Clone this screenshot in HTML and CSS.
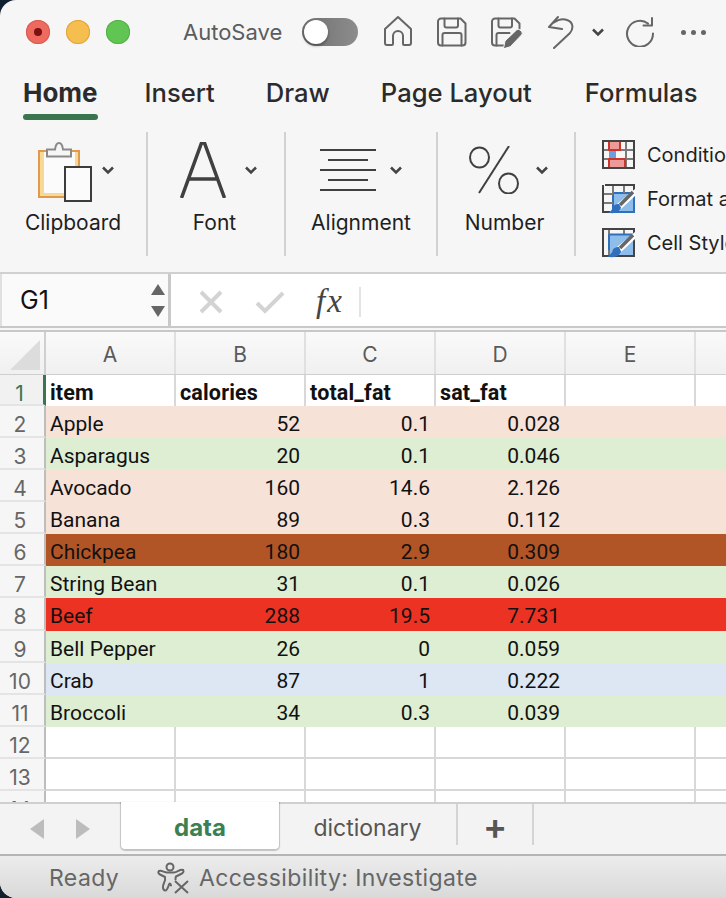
FILE: index.html
```html
<!DOCTYPE html>
<html lang="en">
<head>
<meta charset="utf-8">
<title>Excel</title>
<link rel="stylesheet" href="styles.css">
</head>
<body>
<div class="window">
  <div class="titlebar">
    <div class="lights">
      <span class="light red"><i></i></span>
      <span class="light yellow"></span>
      <span class="light green"></span>
    </div>
    <span class="autosave">AutoSave</span>
    <span class="toggle"><i></i></span>
    <svg class="qa qa-home" width="30" height="32" viewBox="0 0 30 32"><path d="M2 14 15 2l13 12v14a2 2 0 0 1-2 2h-5a1 1 0 0 1-1-1v-8a5 5 0 0 0-10 0v8a1 1 0 0 1-1 1H4a2 2 0 0 1-2-2z"/></svg>
    <svg class="qa qa-save" width="30" height="30" viewBox="0 0 30 30"><path d="M4 1.500h19.500l5 5V25.500a3 3 0 0 1-3 3H4a3 3 0 0 1-3-3V4.500a3 3 0 0 1 3-3z"/><path d="M7.500 1.500v7a2 2 0 0 0 2 2h9.500a2 2 0 0 0 2-2v-7M5.500 28.500V18a2 2 0 0 1 2-2h15a2 2 0 0 1 2 2v10.500"/></svg>
    <svg class="qa qa-edit" width="32" height="32" viewBox="0 0 32 32"><path d="M13 28.500H4a3 3 0 0 1-3-3V4.500a3 3 0 0 1 3-3h19.500l5 5v5"/><path d="M7.500 1.500v7a2 2 0 0 0 2 2h9.500a2 2 0 0 0 2-2v-7M5.500 28.500V18a2 2 0 0 1 2-2h11"/><path class="pen" d="M12.500 31.500 14 24 25.500 13a2.500 2.500 0 0 1 3.500 0l1.500 1.500a2.500 2.500 0 0 1 0 3.500L19.500 29.500z"/></svg>
    <svg class="qa qa-undo" width="28" height="34" viewBox="0 0 28 34"><path d="M2 12 11 2M2 12l13 2M2 12c6-7 13-9 18-7 6 2 7 8 3 13L7 33"/></svg>
    <svg class="qa-chev" width="14" height="10" viewBox="0 0 14 10"><path d="M2 2.500 7 7.500l5-5"/></svg>
    <svg class="qa qa-redo" width="30" height="30" viewBox="0 0 30 30"><path d="M23 6.500A13 13 0 1 0 28 16.500M27 1v7.500h-8.500"/></svg>
    <span class="dots"><i></i><i></i><i></i></span>
  </div>

  <nav class="tabs">
    <span class="tab active">Home</span>
    <span class="tab">Insert</span>
    <span class="tab">Draw</span>
    <span class="tab wide">Page Layout</span>
    <span class="tab">Formulas</span>
  </nav>

  <div class="ribbon">
    <div class="group g-clip">
      <div class="gicon">
        <svg class="gsvg" width="54" height="60" viewBox="0 0 54 60">
          <rect x="0" y="8" width="42" height="48" fill="#e3994c"/>
          <rect x="2" y="10" width="38" height="44" fill="#f6d995"/>
          <rect x="6" y="10" width="31" height="41" fill="#fbfbfb"/>
          <path d="M9 14.500V7.500h8c.5-4 2-6.500 4-6.500s3.500 2.500 4 6.500h8v7z" fill="#f6f6f6" stroke="#8a8a8a" stroke-width="2"/>
          <rect x="27" y="25" width="26" height="34" fill="#fbfbfb" stroke="#3c3c3c" stroke-width="2"/>
        </svg>
        <svg class="chev" width="14" height="10" viewBox="0 0 14 10"><path d="M2 2.500 7 7.500l5-5"/></svg>
      </div>
      <span class="glabel">Clipboard</span>
    </div>
    <div class="group g-font">
      <div class="gicon">
        <svg class="gsvg" width="46" height="56" viewBox="0 0 46 56"><path d="M1.500 56 21.500 1h3l20 55M8.500 37h29" fill="none" stroke="#404040" stroke-width="3.500"/></svg>
        <svg class="chev" width="14" height="10" viewBox="0 0 14 10"><path d="M2 2.500 7 7.500l5-5"/></svg>
      </div>
      <span class="glabel">Font</span>
    </div>
    <div class="group g-align">
      <div class="gicon">
        <svg class="gsvg" width="56" height="42" viewBox="0 0 56 42"><path d="M0 1h56M8 11h40M0 21h56M8 31h40M0 41h56" stroke="#404040" stroke-width="2" fill="none"/></svg>
        <svg class="chev" width="14" height="10" viewBox="0 0 14 10"><path d="M2 2.500 7 7.500l5-5"/></svg>
      </div>
      <span class="glabel">Alignment</span>
    </div>
    <div class="group g-num">
      <div class="gicon">
        <svg class="gsvg" width="50" height="48" viewBox="0 0 50 48"><ellipse cx="10.500" cy="11.500" rx="9.500" ry="10" fill="none" stroke="#404040" stroke-width="2"/><ellipse cx="39.500" cy="37.500" rx="9.500" ry="10" fill="none" stroke="#404040" stroke-width="2"/><path d="M40 0 10 47" stroke="#404040" stroke-width="2"/></svg>
        <svg class="chev" width="14" height="10" viewBox="0 0 14 10"><path d="M2 2.500 7 7.500l5-5"/></svg>
      </div>
      <span class="glabel">Number</span>
    </div>
    <div class="styles">
      <div class="style-row">
        <svg width="33" height="29" viewBox="0 0 33 29"><path d="M1 10h31M1 19h31M24 1v27M12 1v27" fill="none" stroke="#7a7a7a" stroke-width="2"/><rect x="7" y="10" width="7" height="9" fill="#6aa0de"/><rect x="7" y="1" width="11" height="9" fill="#ef9a9a" stroke="#c8372c" stroke-width="2"/><rect x="7" y="19" width="16" height="9" fill="#ef9a9a" stroke="#c8372c" stroke-width="2"/><rect x="1" y="1" width="31" height="27" fill="none" stroke="#444" stroke-width="2"/></svg>
        <span>Conditional Formatting</span>
      </div>
      <div class="style-row">
        <svg width="33" height="30" viewBox="0 0 33 30"><path d="M11 9h21v19H11z" fill="#8fbdea" stroke="#2f6fbd" stroke-width="2"/><path d="M1 10h10M1 19h10M11 1v8M22 1v8" fill="none" stroke="#7a7a7a" stroke-width="2"/><path d="M3 1H32V9M1 1V28H8" fill="none" stroke="#444" stroke-width="2"/><path d="M33 5 15 20l4 5L33 12z" fill="#fff"/><path d="M31 8 18 21" stroke="#666" stroke-width="3.500"/><path d="M17 20c-3 0-6 1-6.500 4-.5 2-2 3.500-4.500 4.500 5 1.500 11 .5 13-5z" fill="#2f6fbd"/></svg>
        <span>Format as Table</span>
      </div>
      <div class="style-row">
        <svg width="33" height="30" viewBox="0 0 33 30"><path d="M7 6h25v22H7z" fill="#8fbdea"/><path d="M7 1v27M22 1v5" fill="none" stroke="#7a7a7a" stroke-width="2"/><path d="M7 6.500h25M7 6.500V22" fill="none" stroke="#2f6fbd" stroke-width="2"/><path d="M1 1h31v27H1z" fill="none" stroke="#444" stroke-width="2"/><path d="M33 4 15 19l4 5L33 11z" fill="#fff"/><path d="M31 7 18 20" stroke="#666" stroke-width="3.500"/><path d="M17 19c-3 0-6 1-6.500 4-.5 2-2 3.500-5.500 5.500 6 1.500 12 .5 14-5z" fill="#2f6fbd"/></svg>
        <span>Cell Styles</span>
      </div>
    </div>
  </div>

  <div class="formula">
    <div class="namebox">
      <span>G1</span>
      <span class="spin"><i class="up"></i><i class="down"></i></span>
    </div>
    <div class="fx-zone">
      <svg width="24" height="24" viewBox="0 0 24 24"><path d="M2 2l20 20M22 2 2 22" stroke="#d3d3d3" stroke-width="4"/></svg>
      <svg class="check" width="30" height="24" viewBox="0 0 30 24"><path d="M2 13l8 8L28 3" fill="none" stroke="#d3d3d3" stroke-width="4"/></svg>
      <span class="fx">fx</span>
      <span class="fx-sep"></span>
    </div>
  </div>

  <div class="grid-head">
    <div class="corner"><i></i></div>
    <div class="col">A</div><div class="col">B</div><div class="col">C</div><div class="col">D</div><div class="col">E</div><div class="col">F</div>
  </div>

  <div class="sheet">
    <div class="row bold"><div class="rh sel">1</div><div class="c">item</div><div class="c">calories</div><div class="c">total_fat</div><div class="c">sat_fat</div><div class="c"></div><div class="c"></div></div>
    <div class="row peach"><div class="rh">2</div><div class="c">Apple</div><div class="c n">52</div><div class="c n">0.1</div><div class="c n">0.028</div><div class="c"></div><div class="c"></div></div>
    <div class="row mint"><div class="rh">3</div><div class="c">Asparagus</div><div class="c n">20</div><div class="c n">0.1</div><div class="c n">0.046</div><div class="c"></div><div class="c"></div></div>
    <div class="row peach"><div class="rh">4</div><div class="c">Avocado</div><div class="c n">160</div><div class="c n">14.6</div><div class="c n">2.126</div><div class="c"></div><div class="c"></div></div>
    <div class="row peach"><div class="rh">5</div><div class="c">Banana</div><div class="c n">89</div><div class="c n">0.3</div><div class="c n">0.112</div><div class="c"></div><div class="c"></div></div>
    <div class="row brown"><div class="rh">6</div><div class="c">Chickpea</div><div class="c n">180</div><div class="c n">2.9</div><div class="c n">0.309</div><div class="c"></div><div class="c"></div></div>
    <div class="row mint"><div class="rh">7</div><div class="c">String Bean</div><div class="c n">31</div><div class="c n">0.1</div><div class="c n">0.026</div><div class="c"></div><div class="c"></div></div>
    <div class="row redr"><div class="rh">8</div><div class="c">Beef</div><div class="c n">288</div><div class="c n">19.5</div><div class="c n">7.731</div><div class="c"></div><div class="c"></div></div>
    <div class="row mint"><div class="rh">9</div><div class="c">Bell Pepper</div><div class="c n">26</div><div class="c n">0</div><div class="c n">0.059</div><div class="c"></div><div class="c"></div></div>
    <div class="row blue"><div class="rh">10</div><div class="c">Crab</div><div class="c n">87</div><div class="c n">1</div><div class="c n">0.222</div><div class="c"></div><div class="c"></div></div>
    <div class="row mint"><div class="rh">11</div><div class="c">Broccoli</div><div class="c n">34</div><div class="c n">0.3</div><div class="c n">0.039</div><div class="c"></div><div class="c"></div></div>
    <div class="row"><div class="rh">12</div><div class="c"></div><div class="c"></div><div class="c"></div><div class="c"></div><div class="c"></div><div class="c"></div></div>
    <div class="row"><div class="rh">13</div><div class="c"></div><div class="c"></div><div class="c"></div><div class="c"></div><div class="c"></div><div class="c"></div></div>
    <div class="row"><div class="rh">14</div><div class="c"></div><div class="c"></div><div class="c"></div><div class="c"></div><div class="c"></div><div class="c"></div></div>
  </div>

  <div class="sheetbar">
    <span class="arrows"><i class="left"></i><i class="right"></i></span>
    <span class="stab on">data</span>
    <span class="stab off">dictionary</span>
    <span class="stab plus">+</span>
  </div>

  <div class="status">
    <span class="ready">Ready</span>
    <svg width="32" height="32" viewBox="0 0 32 32"><g fill="none" stroke="#666" stroke-width="2" stroke-linecap="round" stroke-linejoin="round"><circle cx="13" cy="5" r="3.500"/><path d="M2 9c-1 1-1 2.500 1 3.500l5 2.500c.5 2 0 4-1 6-1.500 3-1.500 7 1 7.500 2 .5 3-3 4-6 .5-1.500 1.500-1 2 1"/><path d="M26 8c1 1 .5 2.500-1 3.500l-6 3c-.5 1-.5 2-.5 3"/><path d="M2 9c3-1 5 1.500 8 1.500h7c3 0 6-3.500 9-2.500"/></g><path d="M18 19l13 12M31 19 18 31" fill="none" stroke="#666" stroke-width="2"/></svg>
    <span class="acc">Accessibility: Investigate</span>
  </div>
</div>
</body>
</html>
```
FILE: styles.css
```css
* { box-sizing: border-box; }
html, body { margin: 0; padding: 0; height: 100%; overflow: hidden; background: #10202e; }
body { font-family: Inter, "Liberation Sans", sans-serif; color: #222; }
.window { width: 726px; height: 898px; background: #f6f6f6; border-radius: 16px 0 0 16px; overflow: hidden; display: flex; flex-direction: column; }

.titlebar { height: 64px; flex: none; display: flex; align-items: center; padding-left: 26px; }
.lights { display: flex; gap: 16px; }
.light { width: 24px; height: 24px; border-radius: 50%; display: flex; align-items: center; justify-content: center; }
.light.red { background: #ee6a5f; box-shadow: inset 0 0 0 1px #d95a50; }
.light.red i { width: 8px; height: 8px; border-radius: 50%; background: #7d1010; }
.light.yellow { background: #f6be4f; box-shadow: inset 0 0 0 1px #e0a53a; }
.light.green { background: #61c554; box-shadow: inset 0 0 0 1px #52b046; }
.autosave { margin-left: 53px; font-size: 22px; color: #5c5c5c; width: 119px; flex: none; }
.toggle { width: 56px; height: 28px; border-radius: 14px; background: linear-gradient(90deg, #6f6f6f, #8d8d8d); display: block; padding: 2px; flex: none; }
.toggle i { display: block; width: 24px; height: 24px; border-radius: 50%; background: #fff; box-shadow: 0 2px 3px rgba(0,0,0,.35); }
.qa { fill: none; stroke: #666; stroke-width: 2; stroke-linecap: round; stroke-linejoin: round; flex: none; }
.qa-home { margin-left: 25px; margin-bottom: 2px; }
.qa-save { margin-left: 24px; }
.qa-edit { margin-left: 24px; margin-top: 2px; }
.qa-edit .pen { fill: #666; stroke: #f6f6f6; stroke-width: 1; }
.qa-undo { margin-left: 24px; }
.qa-chev, .chev { fill: none; stroke: #444; stroke-width: 2.500; flex: none; }
.qa-chev { margin-left: 16px; }
.qa-redo { margin-left: 20px; }
.dots { display: flex; gap: 5px; margin-left: 26px; }
.dots i { width: 5px; height: 5px; border-radius: 50%; background: #666; }

.tabs { height: 63px; flex: none; display: flex; padding-left: 23px; align-items: flex-start; }
.tab { font-size: 25.600px; font-weight: 500; color: #2b2b2b; line-height: 58px; height: 56px; position: relative; white-space: nowrap; margin-right: 51px; }
.tab.wide { margin-right: 53px; }
.tab.active { font-size: 26px; font-weight: 700; margin-right: 47px; }
.tab.active::after { content: ""; position: absolute; left: 0; right: 0; bottom: 0; height: 6px; border-radius: 3px; background: #3a754d; }

.ribbon { height: 147px; flex: none; display: flex; overflow: hidden; border-bottom: 2px solid #d0d0d0; padding-top: 5px; }
.group { height: 124px; border-right: 2px solid #d2d2d2; display: flex; flex-direction: column; align-items: center; flex: none; }
.g-clip { width: 148px; }
.g-font { width: 138px; }
.g-align { width: 152px; }
.g-num { width: 138px; }
.gicon { height: 76px; width: 100%; display: flex; align-items: flex-start; }
.chev { margin-top: 33px; }
.gsvg { flex: none; }
.g-clip .gsvg { margin: 10px 9px 0 38px; }
.g-font .gsvg { margin: 10px 18px 0 32px; }
.g-align .gsvg { margin: 17px 13px 0 34px; }
.g-num .gsvg { margin: 14px 16px 0 31px; }
.glabel { font-size: 21px; color: #1f1f1f; line-height: 30px; }
.g-font .glabel, .g-num .glabel { margin-right: 3px; }
.styles { padding: 8px 0 0 26px; display: flex; flex-direction: column; gap: 15px; flex: none; }
.style-row { display: flex; align-items: center; gap: 12px; height: 29px; font-size: 20px; white-space: nowrap; color: #1f1f1f; }
.style-row svg { flex: none; }

.formula { height: 54px; flex: none; display: flex; background: #fff; border-bottom: 2px solid #c8c8c8; }
.namebox { width: 171px; border-right: 3px solid #c8c8c8; display: flex; align-items: center; justify-content: space-between; padding: 0 3px 0 20px; background: #fafafa; font-size: 25px; color: #111; box-shadow: inset 2px 0 0 #e0e0e0; }
.spin { display: flex; flex-direction: column; gap: 11px; }
.spin i { display: block; width: 0; height: 0; border-left: 7px solid transparent; border-right: 7px solid transparent; }
.spin .up { border-bottom: 11px solid #666; }
.spin .down { border-top: 11px solid #666; }
.fx-zone { display: flex; align-items: center; padding: 3px 0 0 28px; background: #fff; flex: 1; }
.check { margin-left: 32px; }
.fx { margin-left: 31px; font-family: "Liberation Serif", serif; font-style: italic; font-size: 33px; letter-spacing: 2px; color: #444; width: 30px; }
.fx-sep { margin-left: 13px; width: 2px; height: 30px; background: #e3e3e3; }

.grid-head { height: 45px; flex: none; display: flex; border-top: 2px solid #c8c8c8; margin-top: 2px; background: linear-gradient(#fafafa, #f0f0f0); border-bottom: 1px solid #cfcfcf; }
.corner { width: 46px; flex: none; border-right: 2px solid #cfcfcf; padding: 8px 3px 0 10px; }
.corner i { display: block; width: 0; height: 0; border-left: 30px solid transparent; border-bottom: 30px solid #dcdcdc; }
.col { width: 130px; flex: none; text-align: center; font-size: 21px; line-height: 46px; color: #5a5a5a; border-right: 2px solid #e0e0e0; }

.sheet { flex: 1; min-height: 0; overflow: hidden; background: #fff; }
.row { height: 32.080px; display: flex; font-family: Roboto, "Liberation Sans", sans-serif; font-size: 21px; color: #111; }
.row .c { width: 130px; flex: none; line-height: 37px; padding: 0 4px; border-right: 2px solid #d8d8d8; border-bottom: 2px solid #d8d8d8; white-space: nowrap; }
.row .n { text-align: right; }
.rh { width: 46px; flex: none; text-align: center; font-family: Inter, sans-serif; line-height: 37px; color: #666; background: #f6f6f6; border-right: 2px solid #bdbdbd; border-bottom: 2px solid #e4e4e4; padding-right: 4px; }
.rh.sel { color: #3a754d; border-right: 3px solid #3a754d; background: #f1f1f1; }
.bold { height: 31px; }
.bold .c { font-weight: 700; font-size: 21.500px; line-height: 36px; border-bottom: 0; letter-spacing: .15px; }
.peach .c, .mint .c, .brown .c, .redr .c, .blue .c { border-color: transparent; }
.peach .c { background: #f7e2d8; }
.mint .c { background: #deeed3; }
.brown .c { background: #b15527; }
.redr .c { background: #ec3323; }
.blue .c { background: #dde7f4; }

.sheetbar { height: 54px; flex: none; display: flex; align-items: flex-start; background: #f3f3f3; border-top: 2px solid #cfcfcf; border-bottom: 2px solid #b5b5b5; }
.arrows { width: 121px; flex: none; display: flex; gap: 32px; padding: 15px 0 0 30px; }
.arrows i { display: block; width: 0; height: 0; border-top: 10px solid transparent; border-bottom: 10px solid transparent; }
.arrows .left { border-right: 14px solid #bcbcbc; }
.arrows .right { border-left: 14px solid #bcbcbc; }
.stab { font-size: 23px; text-align: center; height: 41px; line-height: 48px; flex: none; }
.stab.on { width: 158px; margin-top: -2px; height: 47px; line-height: 52px; font-size: 24px; background: #fff; color: #3a8052; font-weight: 700; border-radius: 0 0 4px 4px; box-shadow: 0 1px 1px 1px rgba(0,0,0,.2); }
.stab.off { width: 179px; color: #555; border-right: 2px solid #d4d4d4; }
.stab.plus { width: 76px; color: #555; font-size: 36px; font-weight: 600; border-right: 2px solid #d4d4d4; line-height: 44px; }

.status { height: 42px; flex: none; display: flex; align-items: center; background: linear-gradient(#ececec, #d9d9d9); font-size: 23px; letter-spacing: .4px; color: #666; padding: 2px 0 0 49px; }
.ready { width: 108px; flex: none; }
.status svg { flex: none; }
.acc { margin-left: 10px; white-space: nowrap; }
```
